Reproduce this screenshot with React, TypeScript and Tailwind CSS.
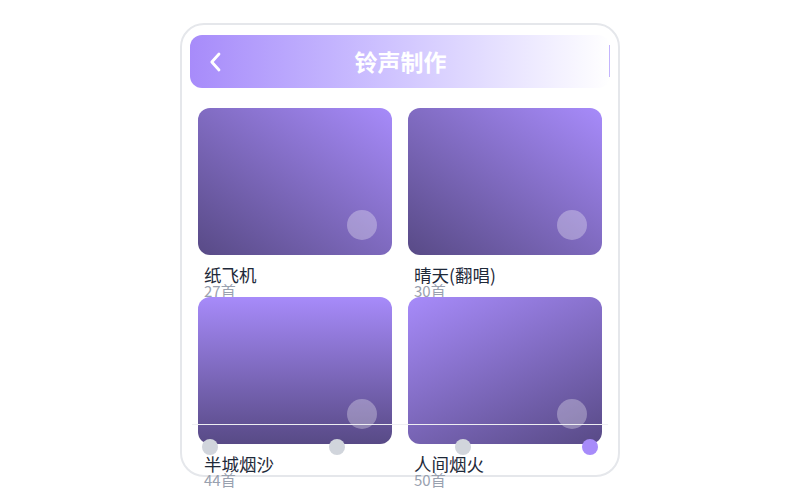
import React from "react";

type Song = {
    name: string;
    count: number;
    bg: string;
};

const songs: Song[] = [
    { name: "纸飞机", count: 27, bg: "bg-linear-[215deg] from-[#a78bfa] to-[#584a86]" },
    { name: "晴天(翻唱)", count: 30, bg: "bg-linear-[215deg] from-[#a78bfa] to-[#584a86]" },
    { name: "半城烟沙", count: 44, bg: "bg-linear-to-b from-[#a78bfa] to-[#584a86]" },
    { name: "人间烟火", count: 50, bg: "bg-linear-[155deg] from-[#a78bfa] to-[#584a86]" },
];

const SongCard = ({ song }: { song: Song }) => {
    return (
        <div className="h-[189px]">
            <div className={`relative h-[147px] rounded-xl ${song.bg}`}>
                <div className="absolute right-[15px] bottom-[15px] h-[30px] w-[30px] rounded-full bg-white/30" />
            </div>
            <p className="mt-2 pl-[6px] text-[17.5px] leading-6 text-gray-800">{song.name}</p>
            <p className="-mt-[4px] pl-[6px] text-[15px] leading-[15px] text-gray-400">{song.count}首</p>
        </div>
    );
};

const App = () => {
    return (
        <div
            className="flex h-screen w-full items-center justify-center bg-white"
            style={{ fontFamily: '"Noto Sans CJK SC", "Noto Sans", sans-serif' }}
        >
            <div className="relative h-[454px] w-[440px] rounded-[24px] border-2 border-gray-200 px-2 pt-[10px]">
                <header className="relative flex h-[53px] items-center rounded-xl bg-linear-to-r from-[#a78bfa] to-white px-[19px]">
                    <svg width="13" height="20" viewBox="0 0 13 20" fill="none">
                        <path d="M10 2 L2.8 10 L10 18" stroke="white" strokeWidth="2.8" strokeLinecap="round" strokeLinejoin="round" />
                    </svg>
                    <h1 className="flex-1 pr-3 text-center text-[23px] font-bold text-white">铃声制作</h1>
                    <span className="absolute right-0 top-[10px] h-[32px] w-px bg-[#c4b5fd]" />
                </header>
                <div className="mt-5 grid grid-cols-2 gap-x-4 px-2">
                    {songs.map((s) => (
                        <SongCard key={s.name} song={s} />
                    ))}
                </div>

                <div className="absolute left-[10px] top-[399px] h-px w-[416px] bg-[#eeeef2]" />
                <div className="absolute left-[20px] top-[414px] flex w-[396px] justify-between">
                    <span className="h-4 w-4 rounded-full bg-gray-300" />
                    <span className="h-4 w-4 rounded-full bg-gray-300" />
                    <span className="h-4 w-4 rounded-full bg-gray-300" />
                    <span className="h-4 w-4 rounded-full bg-[#a78bfa]" />
                </div>
            </div>
        </div>
    );
};

export default App;
